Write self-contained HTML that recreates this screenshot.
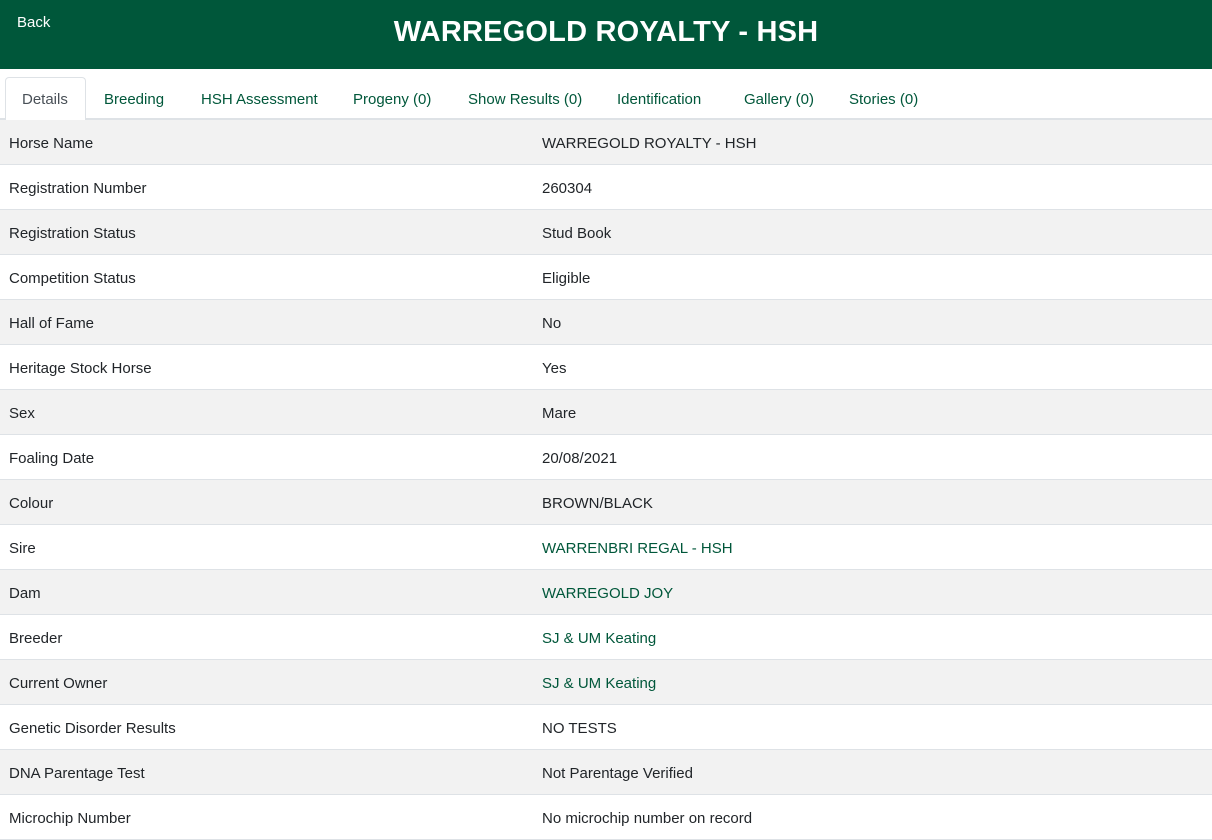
<!DOCTYPE html>
<html><head><style>
body{margin:0;width:1212px;height:832px;overflow:hidden;font-family:"Liberation Sans",sans-serif;background:#fff;}
.hdr{height:69px;background:#00573a;position:relative;color:#fff;}
.back{position:absolute;left:17px;top:14px;font-size:15px;}
.title{position:absolute;left:0;right:0;top:16px;text-align:center;font-size:29px;font-weight:bold;letter-spacing:0.2px;}
.tabs{position:relative;height:51px;border-bottom:2px solid #dee2e6;box-sizing:border-box;}
.tab{position:absolute;top:22px;font-size:15px;color:#00573a;}
.active{position:absolute;left:5px;top:8px;width:79px;height:42px;border:1px solid #dee2e6;border-bottom:none;border-radius:4px 4px 0 0;background:#fff;}
.row{height:44px;border-bottom:1px solid #dee2e6;position:relative;font-size:15px;color:#212529;}
.row:nth-child(odd){background:#f2f2f2;}
.row span{position:absolute;top:15px;}
.l{left:9px}.v{left:542px}
.g{color:#00573a}
</style></head><body>
<div class="hdr"><div class="back">Back</div><div class="title">WARREGOLD ROYALTY - HSH</div></div>
<div class="tabs"><div class="active"></div>
<span class="tab" style="left:22px;color:#495057">Details</span>
<span class="tab" style="left:104px">Breeding</span>
<span class="tab" style="left:201px">HSH Assessment</span>
<span class="tab" style="left:353px">Progeny (0)</span>
<span class="tab" style="left:468px">Show Results (0)</span>
<span class="tab" style="left:617px">Identification</span>
<span class="tab" style="left:744px">Gallery (0)</span>
<span class="tab" style="left:849px">Stories (0)</span>
</div>
<div>
<div class="row"><span class="l">Horse Name</span><span class="v">WARREGOLD ROYALTY - HSH</span></div>
<div class="row"><span class="l">Registration Number</span><span class="v">260304</span></div>
<div class="row"><span class="l">Registration Status</span><span class="v">Stud Book</span></div>
<div class="row"><span class="l">Competition Status</span><span class="v">Eligible</span></div>
<div class="row"><span class="l">Hall of Fame</span><span class="v">No</span></div>
<div class="row"><span class="l">Heritage Stock Horse</span><span class="v">Yes</span></div>
<div class="row"><span class="l">Sex</span><span class="v">Mare</span></div>
<div class="row"><span class="l">Foaling Date</span><span class="v">20/08/2021</span></div>
<div class="row"><span class="l">Colour</span><span class="v">BROWN/BLACK</span></div>
<div class="row"><span class="l">Sire</span><span class="v g">WARRENBRI REGAL - HSH</span></div>
<div class="row"><span class="l">Dam</span><span class="v g">WARREGOLD JOY</span></div>
<div class="row"><span class="l">Breeder</span><span class="v g">SJ &amp; UM Keating</span></div>
<div class="row"><span class="l">Current Owner</span><span class="v g">SJ &amp; UM Keating</span></div>
<div class="row"><span class="l">Genetic Disorder Results</span><span class="v">NO TESTS</span></div>
<div class="row"><span class="l">DNA Parentage Test</span><span class="v">Not Parentage Verified</span></div>
<div class="row"><span class="l">Microchip Number</span><span class="v">No microchip number on record</span></div>
</div>
</body></html>
